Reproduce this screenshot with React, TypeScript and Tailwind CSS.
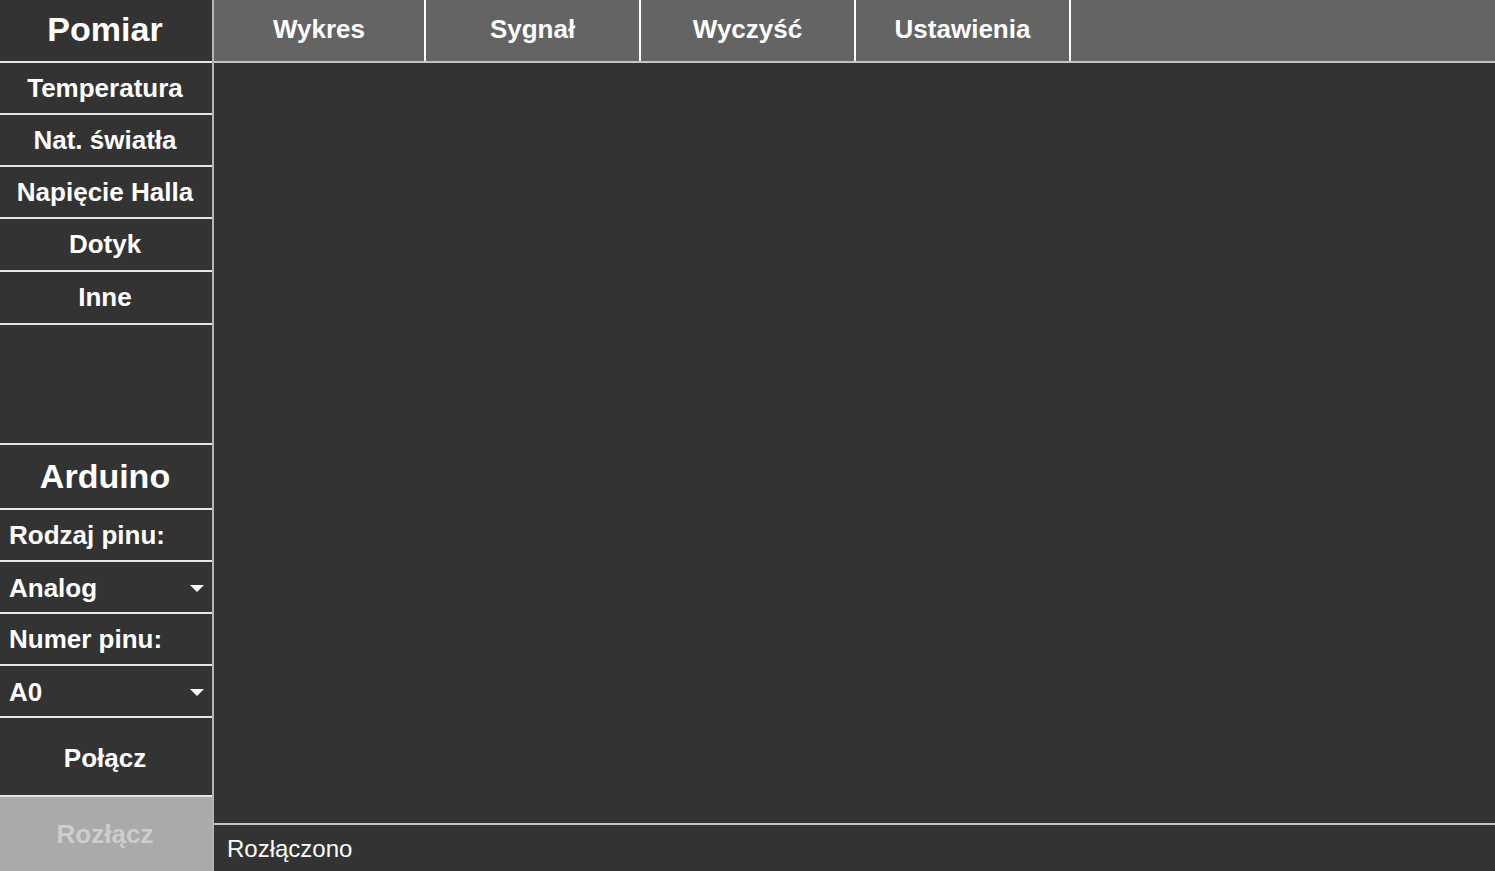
import React from "react";

const font = { fontFamily: '"Liberation Sans", Arial, sans-serif' };

const measures = [
    { name: "Temperatura", h: "h-[52px]" },
    { name: "Nat. światła", h: "h-[52px]" },
    { name: "Napięcie Halla", h: "h-[52px]" },
    { name: "Dotyk", h: "h-[53px]" },
    { name: "Inne", h: "h-[53px]" },
];
const tabs = ["Wykres", "Sygnał", "Wyczyść", "Ustawienia"];

const Caret = () => (
    <svg width="14" height="7" viewBox="0 0 14 7" className="shrink-0">
        <polygon points="0,0 14,0 7,7" fill="#ffffff" />
    </svg>
);

const Select = ({ value }: { value: string }) => (
    <div className="h-[52px] border-b-2 border-[#e6e6e6] flex items-center justify-between pl-[9px] pr-[8px] pt-[2px] text-[26px] font-bold text-white">
        <span>{value}</span>
        <Caret />
    </div>
);

const Label = ({ text }: { text: string }) => (
    <div className="h-[52px] border-b-2 border-[#e6e6e6] flex items-center pl-[9px] pt-[1px] text-[26px] font-bold text-white">
        {text}
    </div>
);

const App = () => {
    return (
        <div className="flex h-[871px] w-full bg-[#333333] overflow-hidden" style={font}>
            <div className="w-[214px] shrink-0 flex flex-col border-r-2 border-[#b4b4b4]">
                <div className="h-[63px] border-b-2 border-[#e6e6e6] flex items-center justify-center pb-[3px] pr-[2px] text-[34px] font-bold text-white">
                    Pomiar
                </div>
                {measures.map((m) => (
                    <div key={m.name} className={`${m.h} border-b-2 border-[#e6e6e6] flex items-center justify-center pr-[2px] text-[26px] font-bold text-white`}>
                        {m.name}
                    </div>
                ))}
                <div className="h-[120px] border-b-2 border-[#e6e6e6]" />
                <div className="h-[65px] border-b-2 border-[#e6e6e6] flex items-center justify-center pr-[2px] text-[34px] font-bold text-white">
                    Arduino
                </div>
                <Label text="Rodzaj pinu:" />
                <Select value="Analog" />
                <Label text="Numer pinu:" />
                <Select value="A0" />
                <div className="h-[79px] border-b-2 border-[#e6e6e6] flex items-center justify-center pt-[3px] pr-[2px] text-[26px] font-bold text-white">
                    Połącz
                </div>
                <div className="flex-1 bg-[#aaaaaa] flex items-center justify-center pr-[2px] text-[26px] font-bold text-[#cdcdcd]">
                    Rozłącz
                </div>
            </div>

            <div className="flex-1 flex flex-col min-w-0">
                <div className="h-[63px] shrink-0 flex bg-[#646464] border-b-2 border-[#c4c4c4]">
                    {tabs.map((t, i) => (
                        <div
                            key={t}
                            className={`${i === 0 ? "w-[212px]" : "w-[215px]"} h-full border-r-2 border-white flex items-center justify-center pb-[2px] text-[26px] font-bold text-white`}
                        >
                            {t}
                        </div>
                    ))}
                </div>
                <div className="flex-1" />
                <div className="h-[48px] shrink-0 border-t-2 border-[#c4c4c4] flex items-center pl-[13px] pt-[2px] text-[24px] text-white">
                    Rozłączono
                </div>
            </div>
        </div>
    );
};

export default App;
